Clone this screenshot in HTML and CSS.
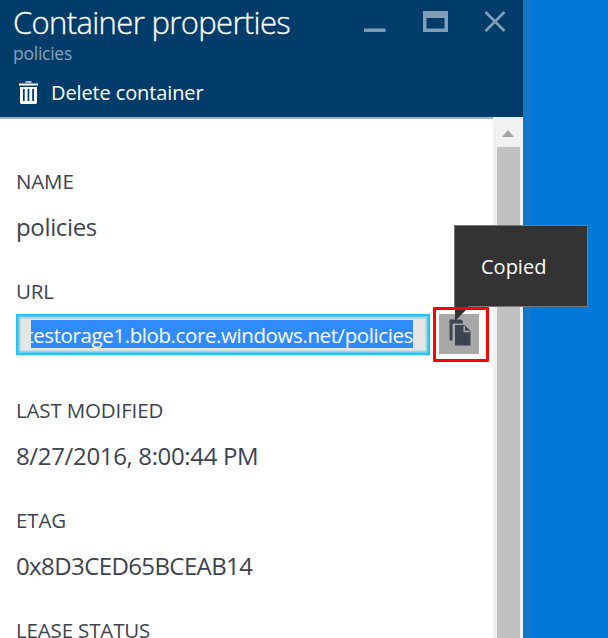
FILE: index.html
```html
<!DOCTYPE html>
<html lang="en">
<head>
<meta charset="utf-8">
<title>Container properties</title>
<link rel="stylesheet" href="styles.css">
</head>
<body>
<main class="blade">
  <header class="header">
    <div class="heading">
      <h1>Container properties</h1>
      <div class="window-actions">
        <svg width="22" height="22" viewBox="0 0 22 22"><path d="M0 19.200h21.500" stroke="#809eb6" stroke-width="3.400"/></svg>
        <svg width="25" height="22" viewBox="0 0 25 22"><path fill="#809eb6" fill-rule="evenodd" d="M0 0h25v21H0zM3.500 7v10.500h18V7z"/></svg>
        <svg width="22" height="22" viewBox="0 0 22 22"><path d="M1.500 1 20.500 20M20.500 1 1.500 20" stroke="#809eb6" stroke-width="2.700"/></svg>
      </div>
    </div>
    <p class="subtitle">policies</p>
    <button class="command">
      <svg width="19" height="24" viewBox="0 0 19 24"><path d="M6.500 1h6" stroke="#a6bccd" stroke-width="2"/><path fill="#fff" fill-rule="evenodd" d="M0 2.500h19v2H0zM1 6h17v15.500q0 1.500-2 1.500H3Q1 23 1 21.500zM4 8v12h1.700V8zM8.600 8v12h1.700V8zM13.200 8v12H15V8z"/></svg>
      <span>Delete container</span>
    </button>
  </header>
  <div class="body">
    <section class="fields">
      <div class="field"><div class="label">NAME</div><div class="value">policies</div></div>
      <div class="field url-field">
        <div class="label">URL</div>
        <div class="copy-row">
          <div class="url-box"><div class="selection"><span>testorage1.blob.core.windows.net/policies</span></div></div>
          <div class="copy">
            <svg width="40" height="40" viewBox="0 0 40 40"><path fill="#3c4351" d="M10.500 5.500H22l2 2v2H13.500v17h-3z"/><path fill="#3c4351" d="M16 11h9.500l6 6v14.500H16z"/><path d="M25.200 12v5.500h5.500" fill="none" stroke="#a8a8a8" stroke-width="1.500"/></svg>
            <div class="tooltip">Copied<svg class="pointer" width="13" height="15" viewBox="0 0 13 15"><path fill="#333" d="M0 0h13v2L0 15z"/></svg></div>
            <div class="highlight"></div>
          </div>
        </div>
      </div>
      <div class="field"><div class="label">LAST MODIFIED</div><div class="value">8/27/2016, 8:00:44 PM</div></div>
      <div class="field"><div class="label">ETAG</div><div class="value hash">0x8D3CED65BCEAB14</div></div>
      <div class="field last"><div class="label">LEASE STATUS</div></div>
    </section>
    <div class="scrollbar">
      <svg width="30" height="30" viewBox="0 0 30 30"><path d="M9 20 15 13l6 7z" fill="#a3a3a3"/></svg>
      <div class="thumb"></div>
    </div>
  </div>
</main>
</body>
</html>
```

FILE: styles.css
```css
* { box-sizing: border-box; }
body { margin: 0; width: 608px; height: 638px; overflow: hidden; background: #0078d7; font-family: "Open Sans", "Noto Sans", sans-serif; color: #3c4351; }
svg { display: block; flex: none; }
h1, p { margin: 0; white-space: nowrap; }
.blade { display: flex; flex-direction: column; width: 531px; height: 638px; border-right: 8px solid #1276c9; }
.header { flex: none; height: 117px; padding-left: 13px; background: #003c6a; color: #fff; }
.heading { display: flex; justify-content: space-between; height: 44px; padding-right: 17px; }
h1 { font-size: 31px; line-height: 44px; font-weight: 350; letter-spacing: -0.65px; -webkit-text-stroke: 0.3px #fff; }
.window-actions { display: flex; gap: 36.5px; padding-top: 11px; }
.subtitle { height: 36px; font-size: 17.5px; line-height: 19px; color: #86a3ba; letter-spacing: -0.25px; }
.command { display: flex; align-items: center; gap: 13px; height: 26px; padding: 0 0 0 6px; border: 0; background: none; color: #fff; font: 20px/26px "Open Sans", sans-serif; letter-spacing: -0.12px; }
.body { display: flex; height: 521px; background: #fff; }
.fields { width: 493px; padding: 47px 0 0 16px; border-top: 2px solid #b0b0b4; }
.field { height: 110px; white-space: nowrap; }
.url-field { height: 119px; }
.last { height: 30px; }
.label { height: 30px; line-height: 30px; font-size: 20.5px; letter-spacing: -0.15px; }
.value { margin-top: 12px; height: 36px; line-height: 38px; font-size: 24px; letter-spacing: -0.35px; }
.hash { letter-spacing: -0.6px; }
.copy-row { display: flex; align-items: flex-start; gap: 9px; margin-top: 8px; }
.url-box { width: 414px; height: 41px; padding: 4px 14px 5px 13px; border: 2px solid #26c3f2; background: #e6e6e6; box-shadow: inset 0 0 0 1px #61d1ee, inset 0 0 2px 2px #86cbdc; }
.selection { display: flex; justify-content: flex-end; width: 382px; height: 28px; overflow: hidden; background: #308bff; color: #fff; font-size: 20.5px; line-height: 31px; letter-spacing: -0.4px; }
.copy { position: relative; width: 40px; height: 40px; background: #a8a8a8; }
.tooltip { position: absolute; left: 15px; top: -89px; width: 134px; height: 82px; padding-left: 26px; border: 1px solid #777; background: #333; color: #fff; font-size: 20px; line-height: 81px; }
.pointer { position: absolute; left: 0; top: 80px; }
.highlight { position: absolute; left: -6px; top: -7px; width: 56px; height: 55px; border: 3px solid #f00; border-radius: 1px; }
.scrollbar { width: 30px; background: #f1f1f1; }
.thumb { width: 23px; height: 491px; margin-left: 4px; background: #c1c1c1; }
```
